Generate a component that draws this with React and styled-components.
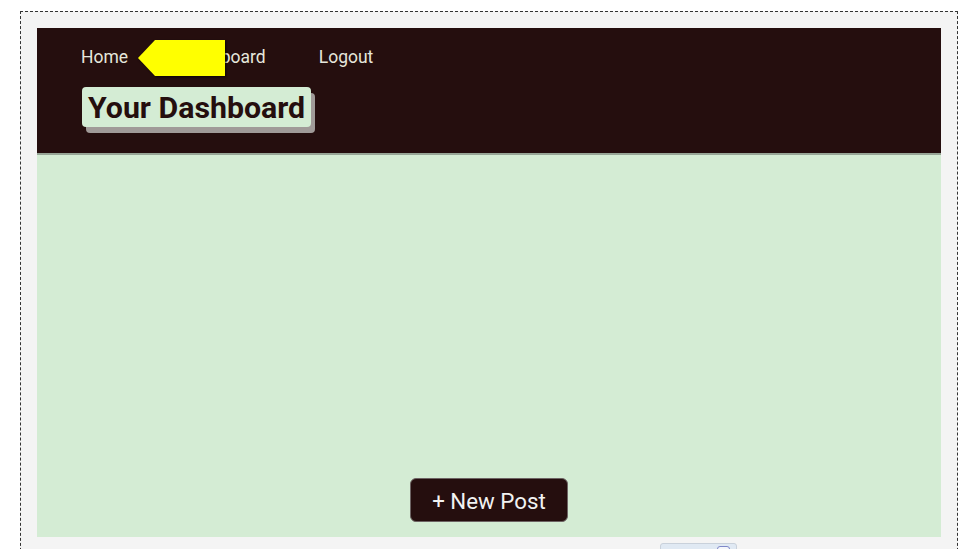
import React from "react";
import styled, { createGlobalStyle } from "styled-components";

const Global = createGlobalStyle`
  html, body { margin: 0; padding: 0; background: #ffffff; }
  body { font-family: Roboto, "Liberation Sans", sans-serif; overflow: hidden; }
  * { box-sizing: border-box; }
`;

const Frame = styled.div`
  margin: 11px 18px 0 20px;
  border: 1px dashed #333333;
  background: #f4f4f4;
  padding: 16px 16px 16px 16px;
  height: 560px;
  position: relative;
`;

const Header = styled.header`
  background: #250e0e;
  height: 127px;
  padding: 16px 0 0 44px;
  border-bottom: 2px solid #97a596;
  display: flex;
  flex-direction: column;
  align-items: flex-start;
`;

const Nav = styled.nav`
  display: flex;
  align-items: center;
  gap: 53px;
  height: 26px;
`;

const NavLink = styled.a`
  color: #e6e6dc;
  font-size: 17.5px;
  text-decoration: none;
  line-height: 26px;
`;

const Title = styled.h1`
  margin: 17px 0 0 1px;
  background: #d4ecd4;
  color: #250e0e;
  font-size: 30.3px;
  font-weight: 700;
  line-height: 41px;
  height: 40px;
  padding: 0 6px;
  border-radius: 4px;
  box-shadow: 4px 6px 0 #a09a98;
`;

const Main = styled.main`
  background: #d4ecd4;
  height: 382px;
  display: flex;
  align-items: flex-end;
  justify-content: center;
  padding-bottom: 15px;
`;

const NewPostButton = styled.button`
  background: #250e0e;
  color: #f2f2f2;
  font-family: Roboto, "Liberation Sans", sans-serif;
  font-size: 22.3px;
  line-height: 44px;
  border: 1px solid #6d6363;
  border-radius: 6px;
  width: 158px;
  height: 44px;
  padding: 0 0 1px 0;
  cursor: pointer;
`;

const Footer = styled.div`
  display: flex;
  margin-top: 6px;
  padding-left: 623px;
`;

const Widget = styled.div`
  width: 77px;
  height: 20px;
  background: #e0e9f3;
  border: 1px solid #c9d1db;
  border-radius: 3px;
  display: flex;
  justify-content: flex-end;
  padding: 2px 6px 0 0;
`;

const WidgetKnob = styled.span`
  width: 13px;
  height: 13px;
  border: 1.5px solid #7f88c8;
  border-radius: 3px;
  background: #f4f6fb;
`;

const Pointer = styled.svg`
  position: absolute;
  left: 117px;
  top: 28px;
  filter: drop-shadow(1.5px 1.5px 1px rgba(0,0,0,0.7));
`;

export default function App() {
  return (
    <>
      <Global />
      <Frame>
        <Header>
          <Nav>
            <NavLink href="#">Home</NavLink>
            <NavLink href="#">Dashboard</NavLink>
            <NavLink href="#">Logout</NavLink>
          </Nav>
          <Title>Your Dashboard</Title>
        </Header>
        <Main>
          <NewPostButton>+ New Post</NewPostButton>
        </Main>
        <Footer>
          <Widget>
            <WidgetKnob />
          </Widget>
        </Footer>
        <Pointer width="92" height="40" viewBox="0 0 92 40">
          <polygon points="0,18 17,0 87,0 87,36 17,36" fill="#ffff00" />
        </Pointer>
      </Frame>
    </>
  );
}
